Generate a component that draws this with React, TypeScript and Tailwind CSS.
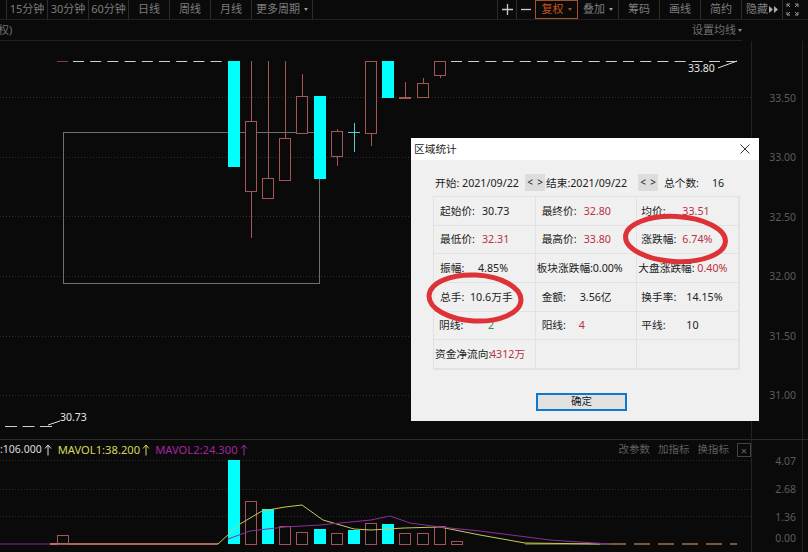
import React from 'react';

const FONT = "font-['Noto_Sans','Noto_Sans_CJK_SC',sans-serif]";

const leftTabs = [
    { label: '15分钟', w: 'w-[41px]' },
    { label: '30分钟', w: 'w-[41px]' },
    { label: '60分钟', w: 'w-[40px]' },
    { label: '日线', w: 'w-[41px]' },
    { label: '周线', w: 'w-[41px]' },
    { label: '月线', w: 'w-[41px]' },
    { label: '更多周期', w: 'w-[61px]', caret: true },
];

const rightTabs = [
    { label: '叠加', w: 'w-[41px]', caret: true },
    { label: '筹码', w: 'w-[41px]' },
    { label: '画线', w: 'w-[41px]' },
    { label: '简约', w: 'w-[41px]' },
];

const candles = [
    { x: 245, top: 121, bottom: 191, hi: 61, lo: 238 },
    { x: 262, top: 178, bottom: 198, hi: 61, lo: 198 },
    { x: 279, top: 138, bottom: 180, hi: 61, lo: 180 },
    { x: 296, top: 96, bottom: 133, hi: 74, lo: 133 },
    { x: 331, top: 131, bottom: 156, hi: 129, lo: 166 },
    { x: 365, top: 61, bottom: 133, hi: 61, lo: 146 },
    { x: 399, top: 97, bottom: 98, hi: 82, lo: 98 },
    { x: 417, top: 83, bottom: 97, hi: 78, lo: 97 },
    { x: 434, top: 61, bottom: 75, hi: 61, lo: 78 },
];

const cyanBars = [
    { x: 228, y: 61, h: 106 },
    { x: 314, y: 96, h: 83 },
    { x: 382, y: 61, h: 37 },
];

const volBars = [
    { x: 57, y: 535, cyan: false },
    { x: 228, y: 460, cyan: true },
    { x: 245, y: 501, cyan: false },
    { x: 262, y: 509, cyan: true },
    { x: 279, y: 526, cyan: false },
    { x: 296, y: 532, cyan: false },
    { x: 314, y: 529, cyan: true },
    { x: 331, y: 533, cyan: false },
    { x: 348, y: 530, cyan: true },
    { x: 365, y: 523, cyan: false },
    { x: 382, y: 524, cyan: true },
    { x: 399, y: 533, cyan: false },
    { x: 417, y: 533, cyan: false },
    { x: 434, y: 526, cyan: false },
    { x: 451, y: 541, cyan: false },
];

const priceLabels = ['33.50', '33.00', '32.50', '32.00', '31.50', '31.00'];
const priceGrid = [97.5, 157.5, 216.5, 276.5, 336.5, 395.5];

const stats = [
    { label: '起始价:', value: '30.73', pl: 'pl-[6px]', w: 'w-[42px]', color: 'text-[#222]' },
    { label: '最终价:', value: '32.80', pl: 'pl-[6px]', w: 'w-[42px]', color: 'text-[#b8323f]' },
    { label: '均价:', value: '33.51', pl: 'pl-[4px]', w: 'w-[41px]', color: 'text-[#b8323f]' },
    { label: '最低价:', value: '32.31', pl: 'pl-[6px]', w: 'w-[42px]', color: 'text-[#b8323f]' },
    { label: '最高价:', value: '33.80', pl: 'pl-[6px]', w: 'w-[42px]', color: 'text-[#b8323f]' },
    { label: '涨跌幅:', value: '6.74%', pl: 'pl-[4px]', w: 'w-[41px]', color: 'text-[#b8323f]' },
    { label: '振幅:', value: '4.85%', pl: 'pl-[6px]', w: 'w-[38px]', color: 'text-[#222]' },
    { label: '板块涨跌幅:', value: '0.00%', pl: 'pl-[1px]', w: 'w-[56px]', color: 'text-[#222]' },
    { label: '大盘涨跌幅:', value: '0.40%', pl: 'pl-[1px]', w: 'w-[59px]', color: 'text-[#b8323f]' },
    { label: '总手:', value: '10.6万手', pl: 'pl-[6px]', w: 'w-[30px]', color: 'text-[#222]' },
    { label: '金额:', value: '3.56亿', pl: 'pl-[6px]', w: 'w-[38px]', color: 'text-[#222]' },
    { label: '换手率:', value: '14.15%', pl: 'pl-[4px]', w: 'w-[45px]', color: 'text-[#222]' },
    { label: '阴线:', value: '2', pl: 'pl-[5px]', w: 'w-[49px]', color: 'text-[#3d8a4d]' },
    { label: '阳线:', value: '4', pl: 'pl-[6px]', w: 'w-[37px]', color: 'text-[#b8323f]' },
    { label: '平线:', value: '10', pl: 'pl-[4px]', w: 'w-[45px]', color: 'text-[#222]' },
    { label: '资金净流向:', value: '4312万', pl: 'pl-[1px]', w: 'w-[55px]', color: 'text-[#b8323f]' },
    { label: '', value: '', pl: '', w: '', color: '' },
    { label: '', value: '', pl: '', w: '', color: '' },
];

const ToolTab: React.FC<{ label: string; w: string; caret?: boolean }> = ({ label, w, caret }) => (
    <div className={`${w} h-full flex items-center justify-center gap-1 border-r border-[#2c2c2c] text-[#7d7d7d] text-[11px] whitespace-nowrap`}>
        <span>{label}</span>
        {caret && <span className="w-0 h-0 border-x-[2.5px] border-x-transparent border-t-[3px] border-t-[#999]" />}
    </div>
);

const UpArrow: React.FC<{ color: string }> = ({ color }) => (
    <svg width="8" height="12" viewBox="0 0 8 12" fill="none" stroke={color} strokeWidth="1">
        <path d="M4 11.5V1M1 4.500 4 1l3 3.500" />
    </svg>
);

const SmallStep: React.FC<{ ch: string }> = ({ ch }) => (
    <span className="w-[10px] h-[17px] bg-[#dcdcdc] flex items-center justify-center text-[10px] text-[#222]">{ch}</span>
);

export default function App() {
    return (
        <div className={`${FONT} relative w-[808px] h-[552px] overflow-hidden bg-[#0a0a0a] flex flex-col`}>
            <div className="h-[20px] flex justify-between pl-[6px] pr-[7px] border-b border-[#202020] shrink-0">
                <div className="flex h-full border-l border-[#2c2c2c]">
                    {leftTabs.map((t) => (
                        <ToolTab key={t.label} {...t} />
                    ))}
                </div>
                <div className="flex h-full border-l border-[#2c2c2c]">
                    <div className="w-[19px] flex items-center justify-center border-r border-[#2c2c2c]">
                        <svg width="11" height="11" viewBox="0 0 11 11" stroke="#ccc" strokeWidth="1.300">
                            <path d="M0 5.500h11M5.500 0v11" />
                        </svg>
                    </div>
                    <div className="w-[18px] flex items-center justify-center">
                        <svg width="10" height="3" viewBox="0 0 10 3" stroke="#ccc" strokeWidth="1.300">
                            <path d="M0 1.500h10" />
                        </svg>
                    </div>
                    <div className="w-[43px] flex items-center justify-center gap-1 border border-[#a5512a] text-[#c9541f] text-[11px]">
                        <span>复权</span>
                        <span className="w-0 h-0 border-x-[2.5px] border-x-transparent border-t-[3px] border-t-[#a5512a]" />
                    </div>
                    {rightTabs.map((t) => (
                        <ToolTab key={t.label} {...t} />
                    ))}
                    <div className="w-[41px] h-full flex items-center justify-center gap-[1px] border-r border-[#2c2c2c] text-[#7d7d7d] text-[11px] whitespace-nowrap">
                        <span>隐藏</span>
                        <svg width="9" height="7" viewBox="0 0 9 7" fill="#aaa">
                            <path d="M0 0 4 3.500 0 7zM5 0 9 3.500 5 7z" />
                        </svg>
                    </div>
                    <div className="w-[18px] flex items-center justify-center">
                        <svg width="13" height="13" viewBox="0 0 13 13" fill="none" stroke="#999" strokeWidth="1">
                            <path d="M1 4V1h3M1 1l3 3M12 4V1H9M12 1 9 4M1 9v3h3M1 12l3-3M12 9v3H9M12 12 9 9" />
                        </svg>
                    </div>
                </div>
            </div>

            <div className="h-[21px] w-[742px] flex items-center justify-between border-b border-[#222] text-[11px] text-[#6f6f6f] shrink-0">
                <span className="ml-[-2px]">权)</span>
                <div className="flex items-center gap-[2px]">
                    <span>设置均线</span>
                    <span className="w-0 h-0 border-x-[2px] border-x-transparent border-t-[3px] border-t-[#888]" />
                </div>
            </div>

            <div className="h-[398px] flex shrink-0">
                <svg className="w-[751px] h-full shrink-0" viewBox="0 41 751 398">
                    {priceGrid.map((y) => (
                        <line key={y} x1="0" x2="751" y1={y} y2={y} stroke="#303030" strokeDasharray="1 2" />
                    ))}
                    <rect x="63.5" y="132.5" width="256" height="151" fill="none" stroke="#6e6e6e" />
                    <line x1="57" x2="68" y1="61.5" y2="61.5" stroke="#8a3f3f" />
                    <line x1="73" x2="224" y1="61.5" y2="61.5" stroke="#cfcfcf" strokeDasharray="11 6.2" />
                    <line x1="451" x2="737" y1="61.5" y2="61.5" stroke="#cfcfcf" strokeDasharray="11 6.2" />
                    <text x="688" y="72" fontSize="10.5" fill="#e4e4e4">33.80</text>
                    <path d="M718 68 737 61" stroke="#ddd" fill="none" />
                    {cyanBars.map((b) => (
                        <rect key={b.x} x={b.x} y={b.y} width="12" height={b.h} fill="#00ffff" />
                    ))}
                    {candles.map((c) => (
                        <g key={c.x} stroke="#a35656" fill="none">
                            <line x1={c.x + 6.5} x2={c.x + 6.5} y1={c.hi} y2={c.top} />
                            <line x1={c.x + 6.5} x2={c.x + 6.5} y1={c.bottom} y2={c.lo} />
                            <rect x={c.x + 0.5} y={c.top + 0.5} width="11" height={c.bottom - c.top} fill="#0a0a0a" />
                        </g>
                    ))}
                    <path d="M348 132.500h12M354.500 123v29" stroke="#4fd0d0" fill="none" />
                    <line x1="5" x2="52" y1="426.500" y2="426.500" stroke="#cfcfcf" strokeDasharray="12 5.500" />
                    <text x="60" y="421" fontSize="10.5" fill="#e4e4e4">30.73</text>
                    <path d="M48 425 60 421" stroke="#ddd" fill="none" />
                </svg>
                <div className="w-[52px] border-l border-[#222] border-r pt-[28px] text-[10.5px] text-[#5c5c5c]">
                    {priceLabels.map((p) => (
                        <div key={p} className="h-[59.500px] flex items-center justify-end pr-[6px]">{p}</div>
                    ))}
                </div>
            </div>

            <div className="flex-1 flex border-t border-[#2a2a2a]">
                <div className="w-[751px] shrink-0 flex flex-col">
                    <div className="h-[20px] flex items-center justify-between text-[11.2px] whitespace-nowrap">
                        <div className="flex items-center">
                            <span className="text-[#ddd] text-[10.5px]">:106.000</span>
                            <span className="ml-[2px] mr-[6px]"><UpArrow color="#ddd" /></span>
                            <span className="text-[#d6d65e]">MAVOL1:38.200</span>
                            <span className="ml-[2px] mr-[5px]"><UpArrow color="#d6d65e" /></span>
                            <span className="text-[#a524a5]">MAVOL2:24.300</span>
                            <span className="ml-[2px]"><UpArrow color="#a524a5" /></span>
                        </div>
                        <div className="flex items-center text-[#5f5f5f] text-[10.500px] gap-[8px]">
                            <span>改参数</span>
                            <span>加指标</span>
                            <span>换指标</span>
                            <span className="w-[14px] h-[14px] border border-[#444] flex items-center justify-center text-[#666] text-[11px] leading-none">×</span>
                        </div>
                    </div>
                    <svg className="w-[751px] h-[92px]" viewBox="0 460 751 92">
                        {[460.5, 489.5, 516.5].map((y) => (
                            <line key={y} x1="0" x2="751" y1={y} y2={y} stroke="#2a2a2a" strokeDasharray="1 2" />
                        ))}
                        <line x1="0" x2="60" y1="544" y2="544" stroke="#8a2a8a" />
                        <line x1="50" x2="218" y1="544" y2="544" stroke="#e08a7a" strokeWidth="1.500" />
                        <line x1="525" x2="610" y1="544" y2="544" stroke="#9aa04a" strokeWidth="1.200" />
                        <line x1="610" x2="737" y1="544" y2="544" stroke="#e6a46a" strokeWidth="1.200" strokeDasharray="16 8" />
                        {volBars.map((b) =>
                            b.cyan ? (
                                <rect key={b.x} x={b.x} y={b.y} width="12" height={544 - b.y} fill="#00ffff" />
                            ) : (
                                <rect key={b.x} x={b.x + 0.5} y={b.y + 0.5} width="11" height={544 - b.y} fill="none" stroke="#a35656" />
                            )
                        )}
                        <polyline points="218,544 240,524 262,511 285,507 302,505 323,520 354,529 371,530 404,528 440,527 480,535 525,543 600,544" fill="none" stroke="#c9c95a" />
                        <polyline points="228,539 250,531 285,527 320,525 371,520 390,516 410,523 440,527 480,531 550,540 610,544" fill="none" stroke="#8e2c9e" />
                    </svg>
                </div>
                <div className="w-[52px] border-l border-r border-[#222] pt-[8px] text-[10.5px] text-[#5c5c5c]">
                    <div className="h-[28px] flex items-center justify-end pr-[6px]">4.07</div>
                    <div className="h-[28px] flex items-center justify-end pr-[6px]">2.68</div>
                    <div className="h-[28px] flex items-center justify-end pr-[6px]">1.36</div>
                    <div className="h-[14px] flex items-center justify-end pr-[6px]">0.00</div>
                </div>
            </div>

            {/* area statistics dialog */}
            <div className="absolute left-[411px] top-[138px] w-[348px] h-[283px] bg-[#f0f0f0] text-[10.7px] text-[#222] flex flex-col">
                <div className="h-[22px] bg-white flex items-center justify-between pl-[3px] pr-[9px] shrink-0">
                    <span>区域统计</span>
                    <svg width="10" height="10" viewBox="0 0 10 10" stroke="#333" strokeWidth="1">
                        <path d="M0.500 0.500 9.500 9.500M9.500 0.500 0.500 9.500" />
                    </svg>
                </div>
                <div className="h-[36px] flex items-end pb-[5px] pl-[24px] whitespace-nowrap shrink-0">
                    <span className="w-[90px]">开始: 2021/09/22</span>
                    <SmallStep ch="<" />
                    <SmallStep ch=">" />
                    <span className="w-[93px] pl-[1px]">结束:2021/09/22</span>
                    <SmallStep ch="<" />
                    <SmallStep ch=">" />
                    <span className="w-[48px] pl-[6px]">总个数:</span>
                    <span className="pl-[6px]">16</span>
                </div>
                <div className="ml-[22px] w-[307px] h-[174px] grid grid-cols-3 grid-rows-6 border border-[#e2e2e2] whitespace-nowrap shrink-0">
                    {stats.map((s, i) => (
                        <div key={i} className={`${s.pl} flex items-center border-r border-b border-[#e2e2e2]`}>
                            <span className={`${s.w} shrink-0`}>{s.label}</span>
                            <span className={s.color}>{s.value}</span>
                        </div>
                    ))}
                </div>
                <div className="flex justify-center pt-[23px] pr-[7px]">
                    <div className="w-[91px] h-[18px] bg-[#e1e1e1] border-2 border-[#0f78c8] flex items-center justify-center text-[10.5px]">确定</div>
                </div>
                <svg className="absolute left-0 top-0 w-[348px] h-[283px] pointer-events-none" viewBox="411 138 348 283" fill="none" stroke="#dd3338" strokeWidth="5">
                    <ellipse cx="675.5" cy="239" rx="50" ry="22.500" transform="rotate(3 675.5 239)" />
                    <ellipse cx="475" cy="298" rx="46" ry="23" transform="rotate(3 475 298)" />
                </svg>
            </div>
        </div>
    );
}
